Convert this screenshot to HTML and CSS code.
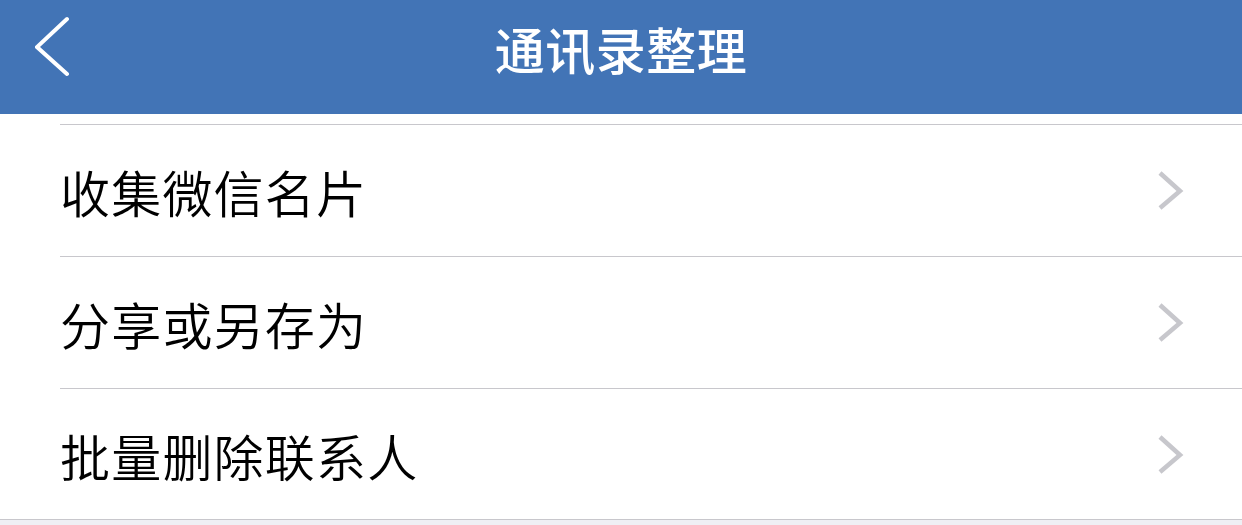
FILE: index.html
```html
<!DOCTYPE html>
<html lang="zh-CN">
<head>
<meta charset="utf-8">
<title>通讯录整理</title>
<link rel="stylesheet" href="styles.css">
</head>
<body>
<header class="navbar">
  <button class="back" aria-label="返回">
    <svg width="40" height="64" viewBox="0 0 40 64">
      <polyline points="32,5 2,33 32,60" fill="none" stroke="#ffffff" stroke-width="4" stroke-linecap="round" stroke-linejoin="miter"/>
    </svg>
  </button>
  <h1 class="title">通讯录整理</h1>
</header>
<main class="content">
  <ul class="list">
    <li class="item"><span class="label">收集微信名片</span><span class="chev"><svg width="30" height="40" viewBox="0 0 30 40"><polyline points="3,2 23,20 3,37" fill="none" stroke="#c7c7cc" stroke-width="4.5"/></svg></span></li>
    <li class="item"><span class="label">分享或另存为</span><span class="chev"><svg width="30" height="40" viewBox="0 0 30 40"><polyline points="3,2 23,20 3,37" fill="none" stroke="#c7c7cc" stroke-width="4.5"/></svg></span></li>
    <li class="item last"><span class="label">批量删除联系人</span><span class="chev"><svg width="30" height="40" viewBox="0 0 30 40"><polyline points="3,2 23,20 3,37" fill="none" stroke="#c7c7cc" stroke-width="4.5"/></svg></span></li>
  </ul>
</main>
</body>
</html>
```
FILE: styles.css
```css
* { box-sizing: border-box; }
html, body {
  margin: 0;
  padding: 0;
  background: #efeff4;
  font-family: "Noto Sans CJK SC", "Noto Sans", sans-serif;
}
.navbar {
  position: relative;
  height: 114px;
  background: #4274b6;
  display: flex;
  align-items: center;
  justify-content: center;
}
.back {
  position: absolute;
  left: 35px;
  top: 14px;
  width: 40px;
  height: 64px;
  padding: 0;
  margin: 0;
  border: 0;
  background: none;
  display: block;
}
.back svg { display: block; }
.title {
  margin: 0;
  color: #ffffff;
  font-size: 50px;
  font-weight: 500;
  line-height: 1;
  margin-top: -18px;
  letter-spacing: 0.5px;
}
.content {
  background: #ffffff;
  padding-top: 10px;
  border-bottom: 1px solid #c8c7cc;
}
.list {
  list-style: none;
  margin: 0;
  padding: 0;
}
.item {
  margin-left: 60px;
  height: 132px;
  border-top: 1px solid #c8c7cc;
  display: flex;
  align-items: center;
  justify-content: space-between;
  padding-top: 1px;
}
.label {
  font-size: 50px;
  font-weight: 350;
  color: #000000;
  line-height: 1;
  letter-spacing: 1.2px;
}
.chev {
  width: 30px;
  height: 40px;
  margin-right: 55px;
  display: block;
}
.chev svg { display: block; }
.item.last { height: 131px; }
```
